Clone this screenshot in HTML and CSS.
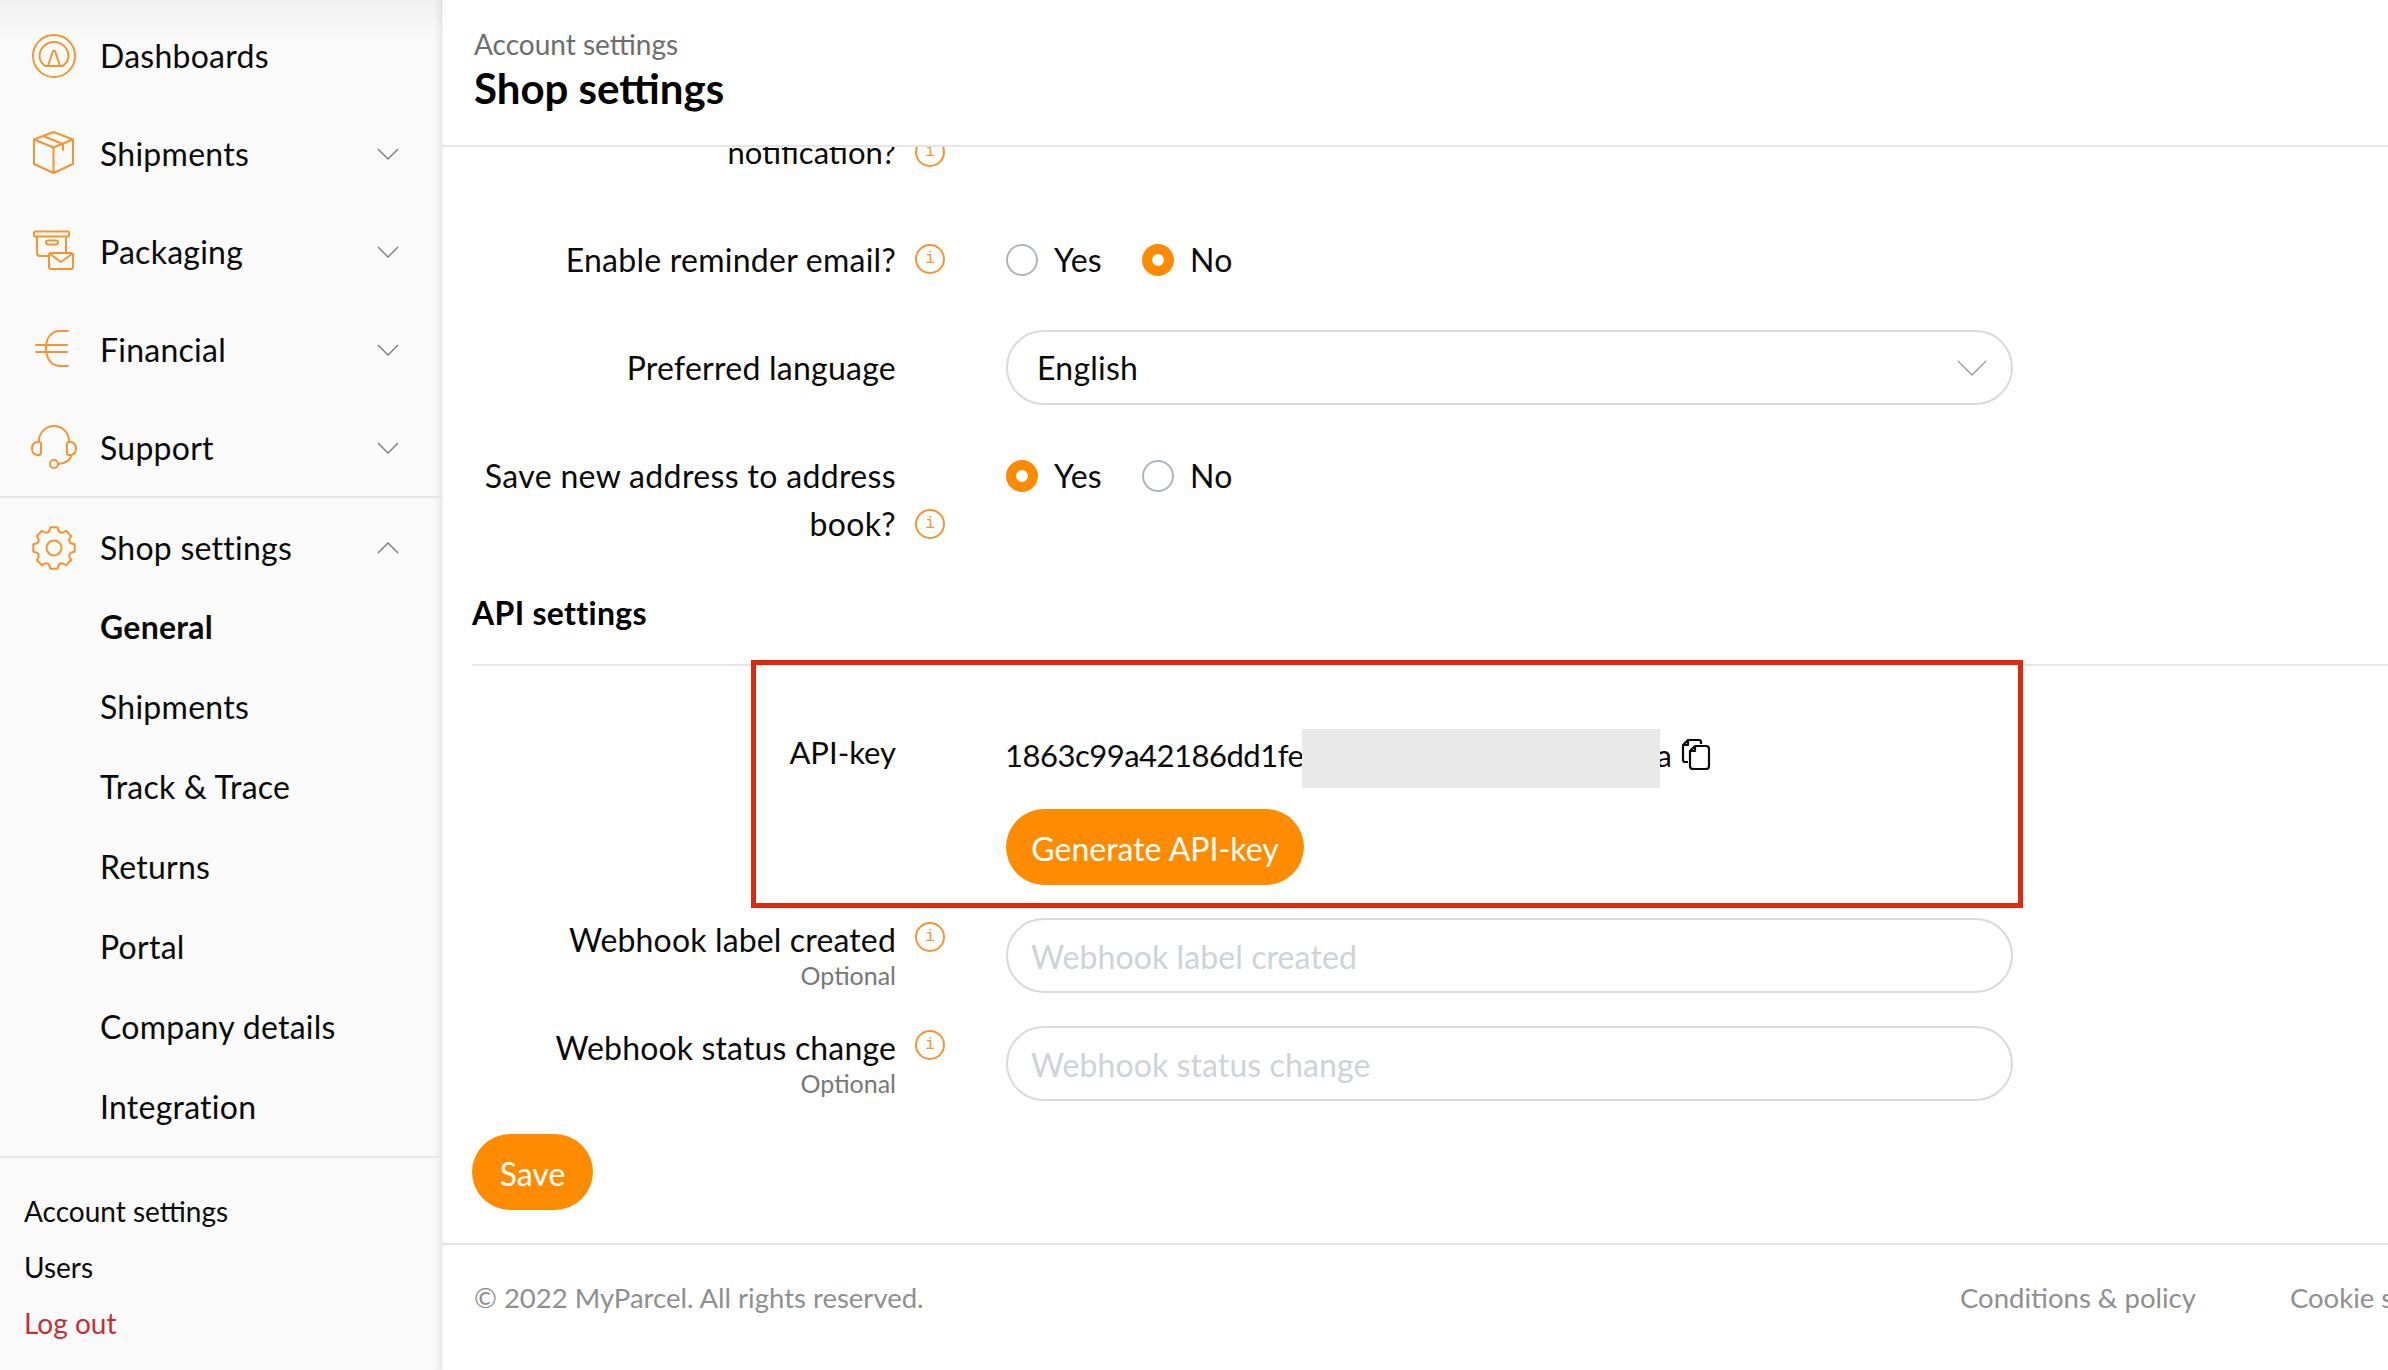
FILE: index.html
```html
<!DOCTYPE html>
<html lang="en">
<head>
<meta charset="utf-8">
<title>Shop settings</title>
<link rel="stylesheet" href="styles.css">
</head>
<body>
<div class="app">
  <aside class="sidebar">
    <nav class="nav-main">
      <a class="nav-item"><svg class="nav-icon" viewBox="0 0 48 48"><circle cx="24" cy="24" r="21"/><path d="M15 34C11 31 9.500 27 9.500 24a14.500 14 0 0 1 29 0c0 3-2 7-5.500 10zM18 34l5-15h2l5 15"/></svg><span class="nav-text">Dashboards</span></a>
      <a class="nav-item"><svg class="nav-icon" viewBox="0 0 48 48"><path d="M23.5 2L43 9.5V34L23.5 43 4 34V9.5zM4 9.5l19.5 8 19.5-8M23.5 17.5V43M13 6l20 8v6"/></svg><span class="nav-text">Shipments</span><svg class="chev" viewBox="0 0 22 12"><path d="M1 1l10 10L21 1"/></svg></a>
      <a class="nav-item"><svg class="nav-icon" viewBox="0 0 48 48"><path d="M5 3.500h33a1 1 0 0 1 1 1v3a1 1 0 0 1-1 1H5a1 1 0 0 1-1-1v-3a1 1 0 0 1 1-1zM7 8.500V25q0 3 3 3h9M36 8.500V25M18 12.500h8a1.500 1.500 0 0 1 0 4h-8a1.500 1.500 0 0 1 0-4zM21 25h20a2 2 0 0 1 2 2v12a2 2 0 0 1-2 2H21a2 2 0 0 1-2-2V27a2 2 0 0 1 2-2zM20 26l11 8 11-8"/></svg><span class="nav-text">Packaging</span><svg class="chev" viewBox="0 0 22 12"><path d="M1 1l10 10L21 1"/></svg></a>
      <a class="nav-item"><svg class="nav-icon" viewBox="0 0 48 48"><path d="M38 5H30C21 5 16 12 16 22s5 18 14 18h8M6 19h31M6 26h31"/></svg><span class="nav-text">Financial</span><svg class="chev" viewBox="0 0 22 12"><path d="M1 1l10 10L21 1"/></svg></a>
      <a class="nav-item"><svg class="nav-icon" viewBox="0 0 48 48"><path d="M9 18v-1a15 15 0 0 1 30 0v1M7 18h2q2 0 2 2v9q0 2-2 2H7q-5-1-5-6.500T7 18zM41 18h-2q-2 0-2 2v9q0 2 2 2h2q5-1 5-6.500T41 18zM41 31c0 5-6 9-13 9"/><circle cx="24" cy="40" r="4"/></svg><span class="nav-text">Support</span><svg class="chev" viewBox="0 0 22 12"><path d="M1 1l10 10L21 1"/></svg></a>
    </nav>
    <nav class="nav-shop">
      <a class="nav-item nav-head"><svg class="nav-icon" viewBox="0 0 48 48"><path d="M44.700 20.350L44.700 27.650Q36 28.970 41.200 36.050L36.050 41.200Q28.970 36 27.650 44.700L20.350 44.700Q19.030 36 11.950 41.200L6.800 36.050Q12 28.970 3.300 27.650L3.300 20.350Q12 19.030 6.800 11.950L11.950 6.800Q19.030 12 20.350 3.300L27.650 3.300Q28.970 12 36.050 6.800L41.200 11.950Q36 19.030 44.700 20.350Z"/><circle cx="24" cy="24" r="7.500"/></svg><span class="nav-text">Shop settings</span><svg class="chev" viewBox="0 0 22 12"><path d="M1 11L11 1l10 10"/></svg></a>
      <a class="sub-item sub-active">General</a>
      <a class="sub-item">Shipments</a>
      <a class="sub-item">Track &amp; Trace</a>
      <a class="sub-item">Returns</a>
      <a class="sub-item">Portal</a>
      <a class="sub-item">Company details</a>
      <a class="sub-item">Integration</a>
    </nav>
    <nav class="nav-foot">
      <a class="foot-item">Account settings</a>
      <a class="foot-item">Users</a>
      <a class="foot-item foot-logout">Log out</a>
    </nav>
  </aside>
  <main class="main">
    <header class="page-head">
      <div class="crumb">Account settings</div>
      <h1 class="title">Shop settings</h1>
    </header>
    <section class="content">
      <div class="row row-clipped">
        <div class="label label-tight">notification?</div>
        <div class="info-slot"><span class="info">i</span></div>
      </div>
      <div class="row row-reminder">
        <div class="label">Enable reminder email?</div>
        <div class="info-slot"><span class="info">i</span></div>
        <div class="radios">
          <label class="radio"><span class="dot"></span>Yes</label>
          <label class="radio"><span class="dot dot-on"></span>No</label>
        </div>
      </div>
      <div class="row row-field row-language">
        <div class="label">Preferred language</div>
        <div class="info-slot"></div>
        <div class="select">English<svg class="select-chev" viewBox="0 0 30 16"><path d="M1 1l14 14L29 1"/></svg></div>
      </div>
      <div class="row row-address">
        <div class="label label-wide">Save new address to address<br>book?</div>
        <div class="info-slot info-end"><span class="info">i</span></div>
        <div class="radios">
          <label class="radio"><span class="dot dot-on"></span>Yes</label>
          <label class="radio"><span class="dot"></span>No</label>
        </div>
      </div>
      <h2 class="section-title">API settings</h2>
      <div class="row row-api">
        <div class="label label-tight label-api">API-key</div>
        <div class="info-slot"></div>
        <div class="api-value">
          <div class="api-key">1863c99a42186dd1fe<span class="key-hidden">0000000000000000</span>a<svg class="copy" viewBox="0 0 30 32"><path d="M7 24H4a2 2 0 0 1-2-2V7l5-5h11a2 2 0 0 1 2 2v2M7 2v5H2M14 8h11a3 3 0 0 1 3 3v17a3 3 0 0 1-3 3H12a3 3 0 0 1-3-3V13zM14 8v5H9"/></svg></div>
          <button class="btn btn-generate">Generate API-key</button>
        </div>
      </div>
      <div class="row row-webhook">
        <div class="label label-hook">Webhook label created<small class="optional">Optional</small></div>
        <div class="info-slot"><span class="info">i</span></div>
        <div class="input">Webhook label created</div>
      </div>
      <div class="row row-webhook">
        <div class="label label-hook">Webhook status change<small class="optional">Optional</small></div>
        <div class="info-slot"><span class="info">i</span></div>
        <div class="input">Webhook status change</div>
      </div>
      <button class="btn btn-save">Save</button>
      <div class="api-mark"></div>
      <div class="key-mask"></div>
    </section>
    <footer class="page-foot">
      <span class="copyright">© 2022 MyParcel. All rights reserved.</span>
      <a class="foot-link">Conditions &amp; policy</a>
      <a class="foot-link">Cookie statement</a>
    </footer>
  </main>
</div>
</body>
</html>
```

FILE: styles.css
```css
* { box-sizing: border-box; }
html, body { margin: 0; height: 100%; overflow: hidden; background: #fff; }
body { font-family: "Lato", "Liberation Sans", sans-serif; font-size: 32px; letter-spacing: .25px; color: #0a0a0a; }
.app { display: flex; width: 2388px; height: 1370px; }

.sidebar {
  flex: 0 0 442px;
  background: linear-gradient(#f1f1f1, #fafafa 40px);
  box-shadow: inset -10px 0 8px -8px rgba(0,0,0,.10), 1px 0 2px rgba(0,0,0,.06);
  display: flex;
  flex-direction: column;
  z-index: 2;
}
.nav-main { padding-top: 7px; border-bottom: 2px solid #e6e6e6; height: 498px; }
.nav-item { display: flex; align-items: center; height: 98px; padding-left: 30px; }
.nav-icon { flex: 0 0 48px; width: 48px; height: 48px; fill: none; stroke: #f39532; stroke-width: 2; stroke-linejoin: round; stroke-linecap: round; }
.nav-text { margin-left: 22px; flex: 1; padding-bottom: 2px; }
.chev { width: 22px; height: 12px; margin-right: 43px; fill: none; stroke: #777; stroke-width: 1.3; }
.nav-shop { padding-top: 11px; height: 660px; border-bottom: 2px solid #e6e6e6; }
.nav-head { height: 78px; }
.sub-item { display: flex; align-items: center; height: 80px; padding: 0 0 2px 100px; }
.sub-active { font-weight: 700; }
.nav-foot { padding-top: 26px; }
.foot-item { display: flex; align-items: center; height: 56px; padding: 0 0 3px 24px; font-size: 28px; letter-spacing: 0; }
.foot-logout { color: #c5303b; }

.main { flex: 1; min-width: 0; display: flex; flex-direction: column; }
.page-head { flex: 0 0 147px; border-bottom: 2px solid #e6e6e6; padding: 26px 0 0 32px; }
.crumb { font-size: 28px; line-height: 36px; letter-spacing: 0; color: #6d6d6d; }
.title { margin: 1px 0 0; font-size: 42px; line-height: 50px; font-weight: 700; letter-spacing: 0; color: #000; }

.content { position: relative; flex: 1; min-height: 0; overflow: hidden; padding-left: 30px; }
.row { display: grid; grid-template-columns: 424px 110px 1007px; }
.label { text-align: right; line-height: 47px; }
.label-tight { letter-spacing: 0; font-size: 31px; }
.label-wide { line-height: 47.500px; letter-spacing: .35px; }
.label-api { margin-top: -2px; }
.label-hook { margin-top: -2px; letter-spacing: .15px; }
.info-slot { padding-left: 19px; padding-top: 8px; }
.info-end { align-self: end; padding-bottom: 8px; padding-top: 0; }
.info { display: block; width: 30px; height: 30px; border: 2px solid #f39532; border-radius: 50%; color: #f39532; font: 16px/26px "Liberation Mono", monospace; letter-spacing: 0; text-align: center; }
.row-clipped { margin-top: -18px; }
.row-reminder { margin-top: 60px; }
.row-language { margin-top: 47px; }
.row-address { margin-top: 47px; }
.row-field .label { align-self: center; }
.radios { display: flex; gap: 40px; line-height: 47px; height: 47px; }
.radio { display: flex; align-items: center; gap: 16px; }
.dot { width: 32px; height: 32px; border-radius: 50%; border: 2px solid #aeb4bd; background: #fff; }
.dot-on { border: 10px solid #ff8c00; }
.select, .input { height: 75px; border: 2px solid #d8dade; border-radius: 38px; display: flex; align-items: center; }
.select { padding: 0 24px 0 29px; justify-content: space-between; }
.select-chev { width: 30px; height: 16px; fill: none; stroke: #999; stroke-width: 1.3; }
.input { padding: 2px 0 0 23px; color: #ced3da; letter-spacing: .1px; }
.section-title { margin: 45px 0 0; padding: 1px 0 31px; font-size: 32px; line-height: 40px; font-weight: 700; letter-spacing: .3px; color: #000; border-bottom: 2px solid #e6e6e6; }
.row-api { margin-top: 65px; }
.api-key { display: flex; align-items: center; height: 47px; white-space: nowrap; font-size: 31px; letter-spacing: -.5px; margin-left: -1px; }
.key-hidden { visibility: hidden; width: 353px; overflow: hidden; flex: none; }
.copy { width: 30px; height: 32px; margin: -2px 0 0 10px; fill: #fff; stroke: #0a0a0a; stroke-width: 2.2; stroke-linejoin: round; }
.btn { display: block; border: 0; border-radius: 38px; background: #ff8c00; color: #fff; font: inherit; letter-spacing: 0; height: 76px; padding: 2px 0 0; }
.btn-generate { margin-top: 31px; width: 298px; }
.btn-save { margin-top: 33px; width: 121px; }
.row-webhook { margin-top: 33px; }
.optional { display: block; font-size: 25px; line-height: 24px; letter-spacing: 0; color: #777; }
.row-webhook .info-slot { padding-top: 4px; }

.api-mark { position: absolute; left: 309px; top: 513px; width: 1272px; height: 248px; border: 5px solid #dc2a0f; }
.key-mask { position: absolute; left: 860px; top: 582px; width: 358px; height: 59px; background: #e9e9e9; }

.page-foot { flex: 0 0 127px; border-top: 2px solid #e6e6e6; display: flex; align-items: center; padding: 0 0 21px 32px; white-space: nowrap; overflow: hidden; font-size: 27.500px; letter-spacing: 0; color: #8f8f8f; }
.copyright { flex: 0 0 1486px; }
.foot-link { flex: none; margin-right: 94px; }
```
